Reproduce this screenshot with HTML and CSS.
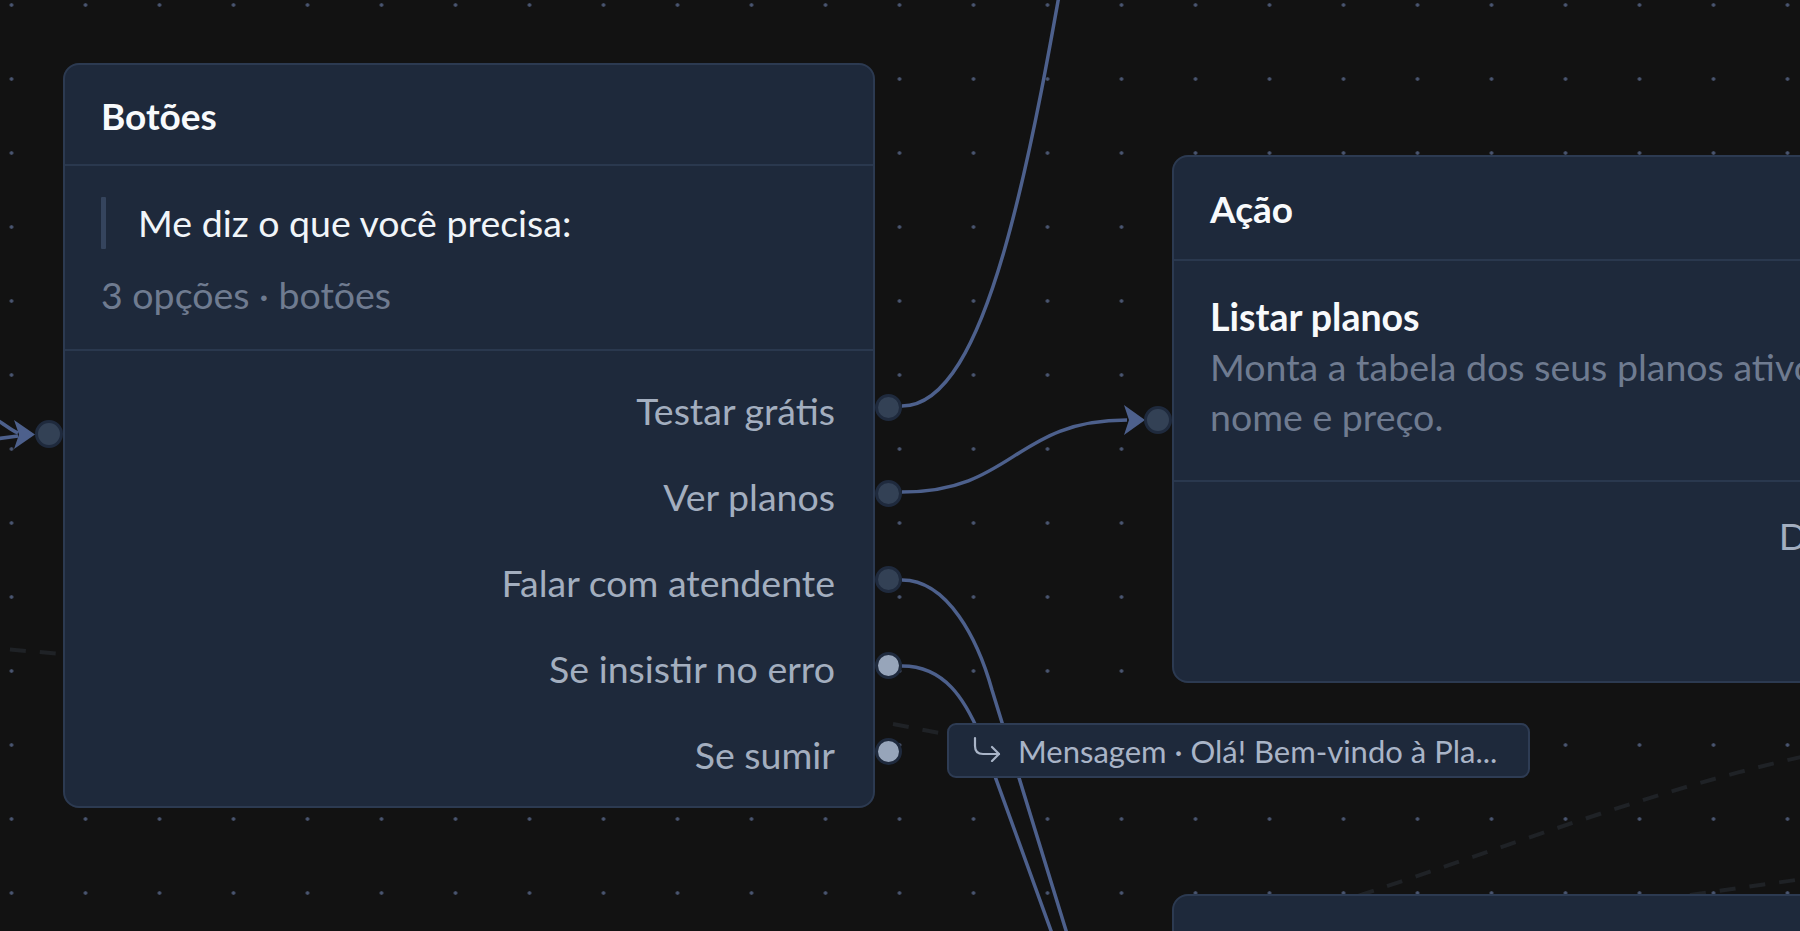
FILE: index.html
```html
<!DOCTYPE html>
<html lang="pt-BR">
<head>
<meta charset="utf-8">
<title>Fluxo</title>
<link rel="stylesheet" href="styles.css">
</head>
<body>
<div class="canvas">
  <svg class="edges" width="1800" height="931" viewBox="0 0 1800 931">
    <path class="edge-dashed" d="M-20,647 L62,654"/>
    <path class="edge-dashed" d="M893,724 L950,735"/>
    <path class="edge-dashed" d="M1330,905 C1500,850 1650,790 1810,755"/>
    <path class="edge-dashed" d="M1690,895 L1810,878"/>
    <path class="edge" d="M902,406 C1075,406 1075,-600 1250,-600"/>
    <path class="edge" d="M902,492 C1014,492 1014,420 1127,420"/>
    <path class="edge" d="M902,580 C948,580 978,640 992,690 L1072,950"/>
    <path class="edge" d="M902,666 C945,666 965,700 980,735 L1058,950"/>
    <path class="edge" d="M-20,414 C0,418 6,428 18,433"/>
    <path class="edge" d="M-20,441 L18,436"/>
    <polygon class="arrow" points="14,420 35,434.5 14,449 19,434.5"/>
    <polygon class="arrow" points="1124,405 1145,420 1124,435 1129,420"/>
  </svg>

  <div class="node node-buttons">
    <span class="handle handle-in"></span>
    <div class="node-header">Botões</div>
    <div class="section">
      <div class="quote">
        <span class="quote-bar"></span>
        <span class="quote-text">Me diz o que você precisa:</span>
      </div>
      <div class="meta">3 opções · botões</div>
    </div>
    <div class="outputs">
      <div class="output">Testar grátis<span class="handle"></span></div>
      <div class="output">Ver planos<span class="handle"></span></div>
      <div class="output">Falar com atendente<span class="handle"></span></div>
      <div class="output">Se insistir no erro<span class="handle handle-light"></span></div>
      <div class="output">Se sumir<span class="handle handle-light"></span></div>
    </div>
  </div>

  <div class="node node-action">
    <span class="handle handle-in"></span>
    <div class="node-header node-header-tall">Ação</div>
    <div class="section section-action">
      <div class="action-title">Listar planos</div>
      <div class="action-desc">Monta a tabela dos seus planos ativos com</div>
      <div class="action-desc">nome e preço.</div>
    </div>
    <div class="outputs outputs-action">
      <div class="output">Deu certo<span class="handle"></span></div>
    </div>
  </div>

  <div class="node node-next"></div>

  <div class="edge-label">
    <svg class="label-icon" width="30" height="26" viewBox="0 0 30 26">
      <path d="M3 2 V10 Q3 18 11 18 H27" fill="none" stroke="#a9b4c7" stroke-width="2.2" stroke-linecap="round"/>
      <path d="M20 11 L27 18 L20 25" fill="none" stroke="#a9b4c7" stroke-width="2.2" stroke-linecap="round" stroke-linejoin="round"/>
    </svg>
    <span class="label-text">Mensagem · Olá! Bem-vindo à Pla...</span>
  </div>
</div>
</body>
</html>
```

FILE: styles.css
```css
* {
  box-sizing: border-box;
  margin: 0;
  padding: 0;
}

html,
body {
  width: 1800px;
  height: 931px;
  overflow: hidden;
  background: #121212;
}

body {
  font-family: Lato, "Noto Sans", sans-serif;
}

.canvas {
  position: relative;
  width: 1800px;
  height: 931px;
  overflow: hidden;
  background-color: #121212;
  background-image: radial-gradient(circle at center, #4a5672 0, #4a5672 1.4px, rgba(74, 86, 114, 0) 2.2px);
  background-size: 74px 74px;
  background-position: -25.5px -32px;
}

.edges {
  position: absolute;
  left: 0;
  top: 0;
  z-index: 0;
}

.edge {
  fill: none;
  stroke: #4d608c;
  stroke-width: 3.5;
}

.edge-dashed {
  fill: none;
  stroke: #1f2226;
  stroke-width: 4;
  stroke-dasharray: 16 14;
}

.arrow {
  fill: #4d608c;
}

.node {
  position: absolute;
  z-index: 1;
  background: #1e293b;
  border: 2px solid #2c3a51;
  border-radius: 16px;
  color: #f8fafc;
}

.node-buttons {
  left: 63px;
  top: 63px;
  width: 812px;
  height: 745px;
}

.node-action {
  left: 1172px;
  top: 155px;
  width: 811px;
  height: 528px;
}

.node-next {
  left: 1172px;
  top: 894px;
  width: 811px;
  height: 200px;
}

.node-header {
  height: 101px;
  display: flex;
  align-items: center;
  padding: 2px 36px 0;
  font-size: 37px;
  font-weight: 700;
  border-bottom: 2px solid #2a384e;
}

.node-header-tall {
  height: 104px;
  padding-top: 0;
}

.section {
  padding: 31px 36px 32px;
  border-bottom: 2px solid #2a384e;
}

.section-action {
  padding-bottom: 38px;
}

.quote {
  display: flex;
  align-items: center;
  gap: 32px;
  height: 52px;
}

.quote-bar {
  width: 5px;
  align-self: stretch;
  background: #35445d;
  border-radius: 1px;
}

.quote-text {
  font-size: 37.5px;
  line-height: 52px;
  color: #f1f5f9;
  white-space: nowrap;
}

.meta {
  margin-top: 24px;
  font-size: 37.5px;
  line-height: 44px;
  color: #6f7b90;
  white-space: nowrap;
}

.action-title {
  font-size: 37.5px;
  font-weight: 700;
  line-height: 50px;
  color: #f8fafc;
}

.action-desc {
  font-size: 37.5px;
  line-height: 50px;
  color: #6f7b90;
  white-space: nowrap;
}

.outputs {
  padding: 16px 38px 0 36px;
}

.outputs-action {
  padding-top: 10px;
}

.output {
  position: relative;
  height: 86px;
  display: flex;
  align-items: center;
  justify-content: flex-end;
  font-size: 37.5px;
  color: #a3aebf;
  white-space: nowrap;
}

.handle {
  position: absolute;
  width: 27px;
  height: 27px;
  border-radius: 50%;
  background: #334155;
  border: 3px solid #1f2a3d;
}

.output .handle {
  left: calc(100% + 40px);
  top: calc(50% - 16px);
}

.handle-light {
  background: #97a5ba;
}

.node-buttons .handle-in {
  left: -30px;
  top: 355px;
  width: 28px;
  height: 28px;
}

.node-action .handle-in {
  left: -30px;
  top: 249px;
  width: 28px;
  height: 28px;
}

.edge-label {
  position: absolute;
  z-index: 2;
  left: 947px;
  top: 723px;
  width: 583px;
  height: 55px;
  display: flex;
  align-items: center;
  gap: 16px;
  padding-left: 23px;
  background: #1e293b;
  border: 2px solid #2e3c54;
  border-radius: 9px;
  font-size: 31px;
  color: #a9b4c7;
  white-space: nowrap;
  overflow: hidden;
}

.label-icon {
  flex: none;
  margin-top: -4px;
}

.label-text {
  line-height: 40px;
}
```
